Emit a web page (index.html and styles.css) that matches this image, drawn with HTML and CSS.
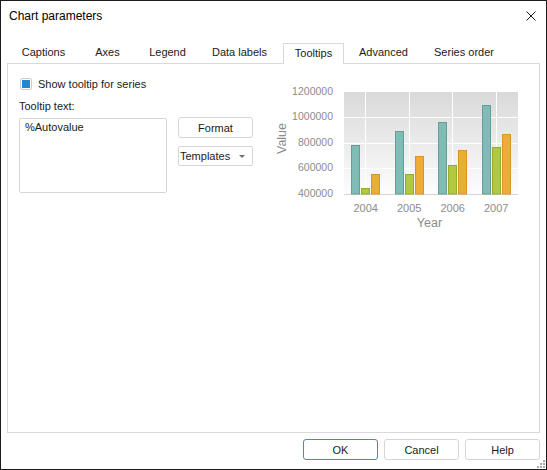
FILE: index.html
```html
<!DOCTYPE html>
<html>
<head>
<meta charset="utf-8">
<title>Chart parameters</title>
<link rel="stylesheet" href="styles.css">
</head>
<body>
<div class="window">
  <div class="titlebar">
    <span class="title">Chart parameters</span>
    <svg class="close" width="10" height="10" viewBox="0 0 10 10"><path d="M0.5 0.5 L9.5 9.5 M9.5 0.5 L0.5 9.5" stroke="#1a1a1a" stroke-width="1" fill="none"/></svg>
  </div>
  <div class="tabs">
    <div class="tab tab-captions">Captions</div>
    <div class="tab tab-axes">Axes</div>
    <div class="tab tab-legend">Legend</div>
    <div class="tab tab-labels">Data labels</div>
    <div class="tab tab-tooltips active">Tooltips</div>
    <div class="tab tab-advanced">Advanced</div>
    <div class="tab tab-order">Series order</div>
  </div>
  <div class="panel">
    <div class="form">
      <div class="check-row"><span class="checkbox"><span class="check-fill"></span></span><span>Show tooltip for series</span></div>
      <div class="field-label">Tooltip text:</div>
      <div class="editor-row">
        <div class="textarea">%Autovalue</div>
        <div class="side-buttons">
          <button class="btn btn-format">Format</button>
          <button class="btn dropdown"><span>Templates</span><span class="caret"></span></button>
        </div>
      </div>
    </div>
    <svg class="chart" width="260" height="160" viewBox="0 0 260 160">
      <defs>
        <linearGradient id="plotbg" x1="0" y1="0" x2="0" y2="1">
          <stop offset="0" stop-color="#d9d9d9"/>
          <stop offset="1" stop-color="#fdfdfd"/>
        </linearGradient>
      </defs>
      <rect x="74" y="15" width="174" height="102" fill="url(#plotbg)"/>
      <g stroke="#ffffff" stroke-width="1">
        <line x1="74" y1="40.5" x2="248" y2="40.5"/>
        <line x1="74" y1="66.5" x2="248" y2="66.5"/>
        <line x1="74" y1="91.5" x2="248" y2="91.5"/>
        <line x1="95.5" y1="15" x2="95.5" y2="117"/>
        <line x1="139.5" y1="15" x2="139.5" y2="117"/>
        <line x1="182.5" y1="15" x2="182.5" y2="117"/>
        <line x1="226.5" y1="15" x2="226.5" y2="117"/>
      </g>
      <line x1="74" y1="117.5" x2="248" y2="117.5" stroke="#d4d4d4" stroke-width="1"/>
      <g class="bar-teal">
        <rect x="81.5" y="68.5" width="8" height="48.5"/>
        <rect x="125.5" y="54.5" width="8" height="62.5"/>
        <rect x="168.5" y="45.5" width="8" height="71.5"/>
        <rect x="212.5" y="28.5" width="8" height="88.5"/>
      </g>
      <g class="bar-green">
        <rect x="91.5" y="111.5" width="8" height="5.5"/>
        <rect x="135.5" y="97.5" width="8" height="19.5"/>
        <rect x="178.5" y="88.5" width="8" height="28.5"/>
        <rect x="222.5" y="70.5" width="8" height="46.5"/>
      </g>
      <g class="bar-orange">
        <rect x="101.5" y="97.5" width="8" height="19.5"/>
        <rect x="145.5" y="79.5" width="8" height="37.5"/>
        <rect x="188.5" y="73.5" width="8" height="43.5"/>
        <rect x="232.5" y="57.5" width="8" height="59.5"/>
      </g>
      <g class="axis-y">
        <text x="63" y="15">1200000</text>
        <text x="63" y="40.5">1000000</text>
        <text x="63" y="66">800000</text>
        <text x="63" y="91.5">600000</text>
        <text x="63" y="117">400000</text>
      </g>
      <g class="axis-x">
        <text x="95.75" y="132">2004</text>
        <text x="139.25" y="132">2005</text>
        <text x="182.75" y="132">2006</text>
        <text x="226.25" y="132">2007</text>
      </g>
      <text class="axis-title" x="159.5" y="147">Year</text>
      <text class="axis-title" x="0" y="0" transform="translate(12.5 61.5) rotate(-90)">Value</text>
    </svg>
  </div>
  <div class="footer">
    <button class="btn btn-footer btn-primary">OK</button>
    <button class="btn btn-footer">Cancel</button>
    <button class="btn btn-footer">Help</button>
  </div>
  <svg class="grip" width="10" height="10" viewBox="0 0 10 10">
    <g fill="#a8a8a8">
      <rect x="7" y="1" width="2" height="2"/>
      <rect x="4" y="4" width="2" height="2"/>
      <rect x="7" y="4" width="2" height="2"/>
      <rect x="1" y="7" width="2" height="2"/>
      <rect x="4" y="7" width="2" height="2"/>
      <rect x="7" y="7" width="2" height="2"/>
    </g>
  </svg>
</div>
</body>
</html>
```

FILE: styles.css
```css
* {
  box-sizing: border-box;
}

html,
body {
  margin: 0;
  padding: 0;
  background: #ffffff;
}

body {
  font-family: "Liberation Sans", Arial, sans-serif;
  font-size: 11px;
  color: #1a1a1a;
}

.window {
  position: relative;
  width: 547px;
  height: 470px;
  border: 1px solid #1c1c1c;
  background: #ffffff;
  overflow: hidden;
}

.titlebar {
  height: 30px;
  display: flex;
  align-items: center;
  justify-content: space-between;
  padding: 0 10px 0 8px;
}

.title {
  font-size: 12px;
  color: #000000;
}

.close {
  display: block;
  margin-top: -1px;
}

.tabs {
  display: flex;
  height: 20px;
  margin: 12px 0 0 7px;
}

.tab {
  height: 20px;
  line-height: 19px;
  text-align: center;
  white-space: nowrap;
  color: #1a1a1a;
}

.tab-captions { width: 71px; }
.tab-axes { width: 57px; }
.tab-legend { width: 63px; }
.tab-labels { width: 81px; }
.tab-tooltips { width: 61px; margin-left: 3px; }
.tab-advanced { width: 79px; }
.tab-order { width: 82px; }

.tab.active {
  position: relative;
  z-index: 1;
  height: 21px;
  margin-bottom: -1px;
  border: 1px solid #d9d9d9;
  border-bottom: none;
  background: #ffffff;
  line-height: 18px;
}

.panel {
  display: flex;
  align-items: flex-start;
  width: 533px;
  height: 370px;
  margin-left: 6px;
  padding: 13px 0 0 11px;
  border: 1px solid #d9d9d9;
}

.form {
  width: 234px;
  display: flex;
  flex-direction: column;
}

.check-row {
  display: flex;
  align-items: center;
  height: 14px;
  gap: 6px;
  padding-left: 1px;
}

.checkbox {
  display: flex;
  align-items: center;
  justify-content: center;
  width: 12px;
  height: 12px;
  border: 1px solid #cccccc;
  border-radius: 2px;
  background: #ffffff;
}

.check-fill {
  width: 8px;
  height: 8px;
  background: #2386d3;
}

.field-label {
  margin-top: 8px;
  height: 14px;
  line-height: 14px;
}

.editor-row {
  display: flex;
  align-items: flex-start;
  gap: 11px;
  margin-top: 4px;
}

.textarea {
  width: 150px;
  height: 75px;
  margin-top: 1px;
  padding: 1px 5px;
  line-height: 14px;
  border: 1px solid #d6d6d6;
  border-radius: 2px;
}

.side-buttons {
  display: flex;
  flex-direction: column;
  gap: 8px;
  width: 75px;
}

.btn {
  font-family: "Liberation Sans", Arial, sans-serif;
  font-size: 11px;
  color: #1a1a1a;
  background: #ffffff;
  border: 1px solid #d6d6d6;
  border-radius: 3px;
  padding: 0;
  margin: 0;
}

.btn-format {
  width: 75px;
  height: 21px;
}

.dropdown {
  display: flex;
  align-items: center;
  justify-content: space-between;
  width: 75px;
  height: 20px;
  padding: 0 7px 0 1px;
  border-radius: 2px;
}

.caret {
  width: 0;
  height: 0;
  border-left: 3px solid transparent;
  border-right: 3px solid transparent;
  border-top: 3px solid #707070;
}

.chart {
  display: block;
  margin-left: 17px;
}

.chart text {
  font-family: "Liberation Sans", Arial, sans-serif;
  fill: #8c8c8c;
  dominant-baseline: middle;
}

.axis-y text {
  font-size: 10.5px;
  text-anchor: end;
}

.axis-x text {
  font-size: 11px;
  text-anchor: middle;
}

.chart .axis-title {
  font-size: 12.5px;
  text-anchor: middle;
}

.bar-teal rect {
  fill: #80bcb5;
  stroke: #619f98;
  stroke-width: 1;
}

.bar-green rect {
  fill: #b2c93f;
  stroke: #93ab2f;
  stroke-width: 1;
}

.bar-orange rect {
  fill: #ecad36;
  stroke: #da952a;
  stroke-width: 1;
}

.footer {
  display: flex;
  justify-content: flex-end;
  gap: 6px;
  margin-top: 6px;
  padding-right: 6px;
}

.btn-footer {
  width: 75px;
  height: 21px;
}

.btn-primary {
  border-color: #3c8dd0;
}

.grip {
  position: absolute;
  right: 0;
  bottom: 0;
  display: block;
}
```
